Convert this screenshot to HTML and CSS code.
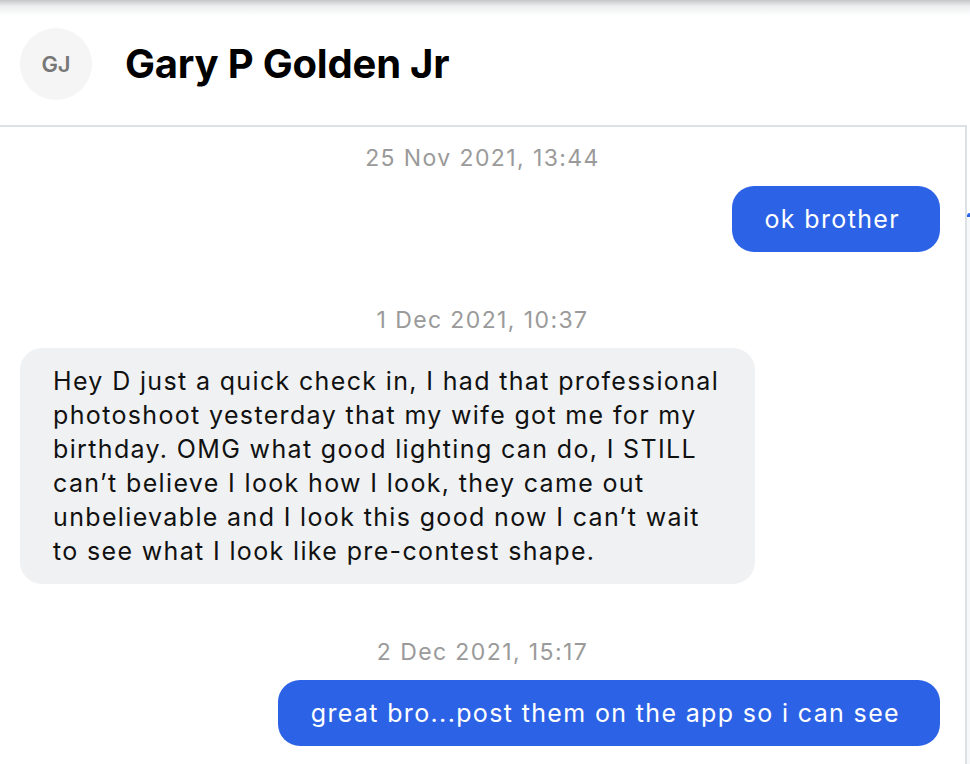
FILE: index.html
```html
<!DOCTYPE html>
<html>
<head>
    <meta charset="utf-8" />
    <title>Messages</title>
    <link rel="stylesheet" href="styles.css">
</head>

<body>
    <div class="app">
        <div class="chat">
            <div class="chat-header">
                <div class="avatar">GJ</div>
                <h1 class="contact-name">Gary P Golden Jr</h1>
            </div>

            <div class="messages">
                <div class="stamp">25 Nov 2021, 13:44</div>
                <div class="row row-out">
                    <div class="bubble bubble-out">ok brother</div>
                </div>

                <div class="stamp">1 Dec 2021, 10:37</div>
                <div class="row row-in">
                    <div class="bubble bubble-in">Hey D just a quick check in, I had that professional photoshoot yesterday that my wife got me for my birthday. OMG what good lighting can do, I STILL can’t believe I look how I look, they came out unbelievable and I look this good now I can’t wait to see what I look like pre-contest shape.</div>
                </div>

                <div class="stamp">2 Dec 2021, 15:17</div>
                <div class="row row-out">
                    <div class="bubble bubble-out">great bro...post them on the app so i can see</div>
                </div>
            </div>
        </div>

        <div class="side">
            <div class="side-pane"></div>
        </div>
    </div>
</body>
</html>
```

FILE: styles.css
```css
* {
    margin: 0px;
    padding: 0px;
    box-sizing: border-box;
}

body {
    background-color: #ffffff;
    font-family: "Inter", "Liberation Sans", sans-serif;
    color: #111111;
    overflow: hidden;
}

.app {
    display: flex;
    height: 764px;
    background: linear-gradient(to bottom, #c4c6c8 0px, #eceeef 6px, #ffffff 16px);
}

.chat {
    width: 965px;
    flex-shrink: 0;
}

.chat-header {
    display: flex;
    align-items: center;
    gap: 33px;
    height: 127px;
    padding: 2px 20px 0px 20px;
    border-bottom: 2px solid #dde1e4;
}

.avatar {
    width: 72px;
    height: 72px;
    border-radius: 50%;
    background-color: #f5f5f5;
    color: #777777;
    display: flex;
    align-items: center;
    justify-content: center;
    font-size: 22px;
    font-weight: 600;
}

.contact-name {
    font-size: 40px;
    font-weight: 700;
    color: #000000;
    letter-spacing: -0.2px;
}

.messages {
    display: flex;
    flex-direction: column;
    padding: 19px 25px 0px 20px;
}

.stamp {
    text-align: center;
    font-size: 23px;
    line-height: 24px;
    letter-spacing: 1.4px;
    color: #9a9a9a;
    margin: 0px 0px 16px 5px;
}

.row {
    display: flex;
    margin-bottom: 56px;
}

.row-out {
    justify-content: flex-end;
}

.row-in {
    justify-content: flex-start;
}

.bubble {
    font-size: 25px;
    line-height: 34px;
    letter-spacing: 1.35px;
    padding: 16px 40px 16px 33px;
    border-radius: 22px;
    max-width: 735px;
}

.bubble-out {
    background-color: #2c62e6;
    color: #ffffff;
}

.bubble-in {
    background-color: #f0f1f3;
    color: #111111;
    padding: 16px 28px 16px 33px;
}

.side {
    flex: 1;
    border-left: 2px solid #dde1e4;
    margin-top: 125px;
    padding-top: 88px;
}

.side-pane {
    height: 100%;
    background-color: #f7f8f9;
    border-top: 4px solid #2c62e6;
    border-top-left-radius: 6px;
}
```
